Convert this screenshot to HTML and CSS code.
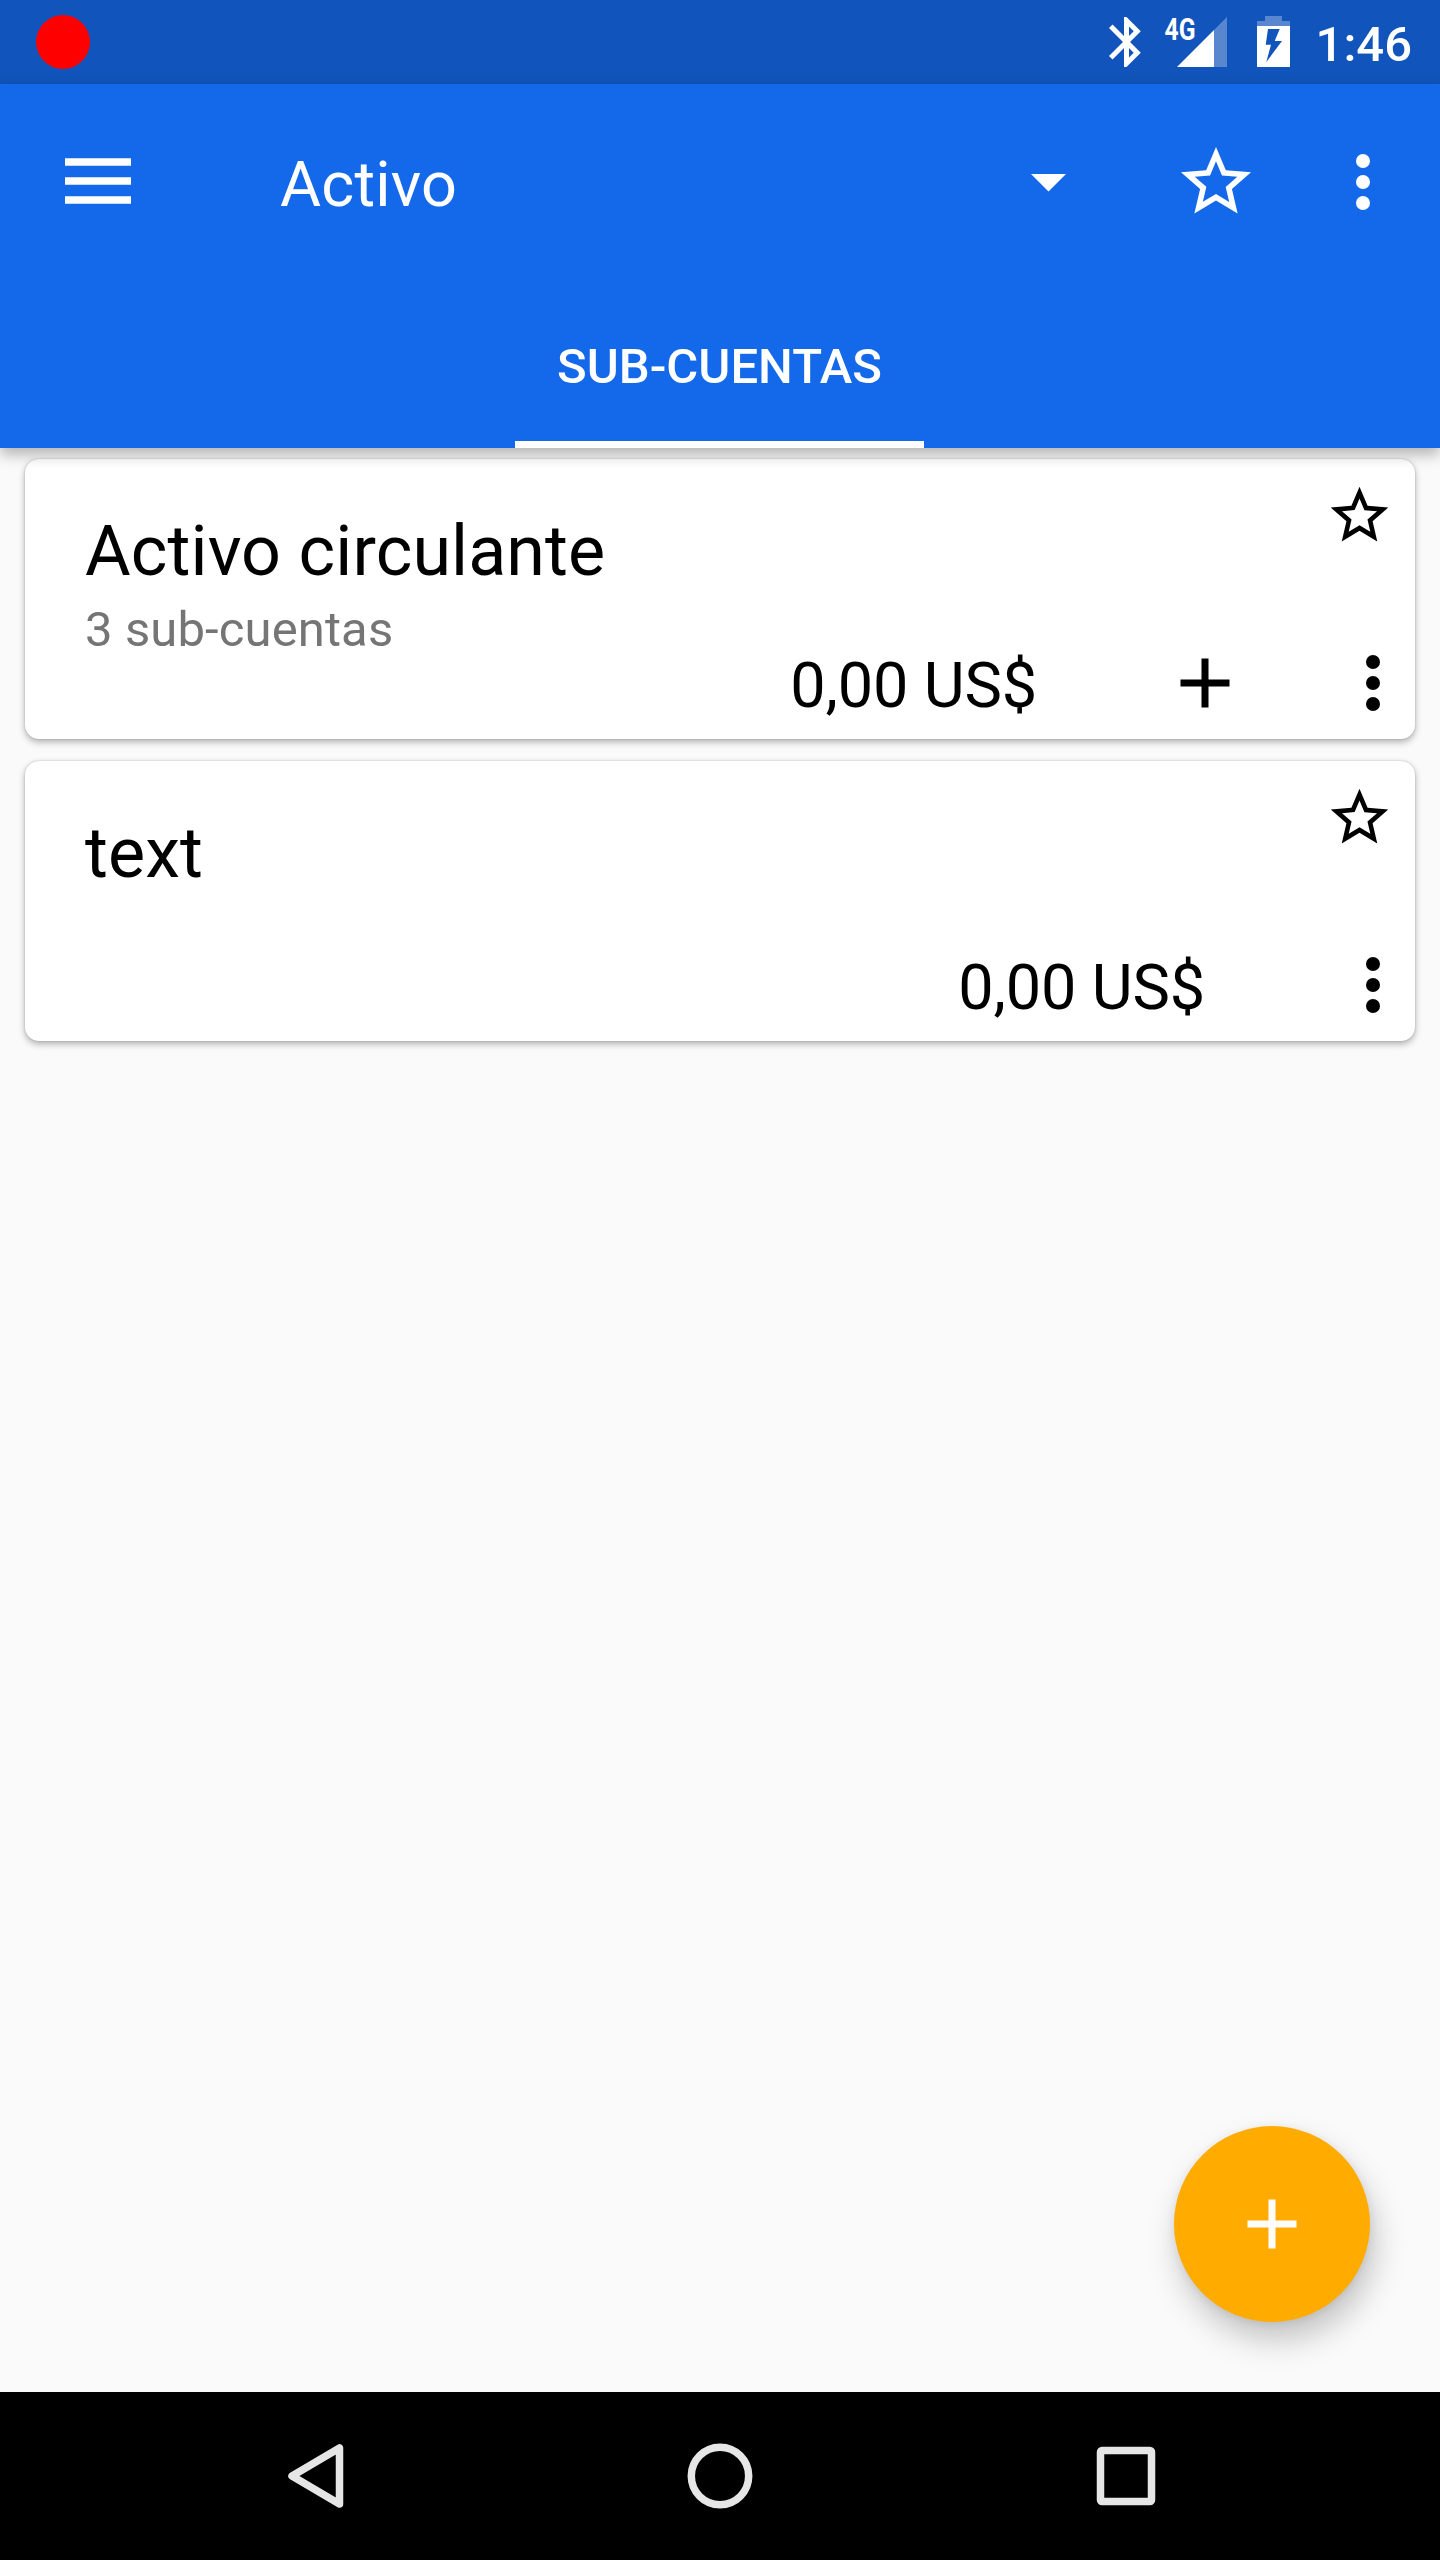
FILE: index.html
```html
<!DOCTYPE html>
<html lang="es">
<head>
<meta charset="utf-8">
<title>Activo</title>
<link rel="stylesheet" href="styles.css">
</head>
<body>
<svg class="defs" aria-hidden="true">
  <symbol id="star" viewBox="0 0 24 24"><path d="M22 9.24l-7.19-.62L12 2 9.19 8.63 2 9.24l5.46 4.73L5.82 21 12 17.27 18.18 21l-1.63-7.03L22 9.24zM12 15.4l-3.76 2.27 1-4.28-3.32-2.88 4.38-.38L12 6.1l1.71 4.04 4.38.38-3.32 2.88 1 4.28L12 15.4z"/></symbol>
  <symbol id="more" viewBox="0 0 24 24"><circle cx="12" cy="6" r="2"/><circle cx="12" cy="12" r="2"/><circle cx="12" cy="18" r="2"/></symbol>
  <symbol id="plus" viewBox="0 0 24 24"><path d="M19 13h-6v6h-2v-6H5v-2h6V5h2v6h6z"/></symbol>
</svg>
<div class="screen">
  <div class="status">
    <span class="record"></span>
    <svg class="status-icons" viewBox="0 0 220 84">
      <path transform="translate(16.5 12) scale(2.5)" d="M17.71 7.71L12 2h-1v7.59L6.41 5 5 6.41 10.59 12 5 17.59 6.41 19 11 14.41V22h1l5.71-5.71-4.3-4.29 4.3-4.29zM13 5.83l1.88 1.88L13 9.59V5.83zm1.88 10.46L13 18.17v-3.76l1.88 1.88z"/>
      <text class="network" x="84.500" y="39.500" textLength="31" lengthAdjust="spacingAndGlyphs">4G</text>
      <path d="M97 67l37-37v37z"/>
      <path class="faint" d="M134 30l13-13v50h-13z"/>
      <path class="faint" d="M185 16h17v5h8v5h-33v-5h8z"/>
      <path fill-rule="evenodd" d="M177 26h33v41h-33zM188 29l-2.300 15.700h5.300L186.300 62 202 41h-7.300L199.700 29z"/>
    </svg>
    <span class="clock">1:46</span>
  </div>
  <header class="appbar">
    <div class="toolbar">
      <svg class="menu" viewBox="0 0 66 46"><path d="M0 .3h66v7.400H0zM0 19.300h66v7.400H0zM0 38.300h66v7.400H0z"/></svg>
      <h1 class="title">Activo</h1>
      <svg class="caret" viewBox="0 0 35 17.500"><path d="M0 0h35L17.500 17.500z"/></svg>
      <svg class="icon fav"><use href="#star"/></svg>
      <svg class="icon"><use href="#more"/></svg>
    </div>
    <nav class="tabs"><span class="tab">SUB-CUENTAS</span></nav>
  </header>
  <main class="list">
    <article class="card">
      <div class="card-top">
        <div class="labels">
          <h2 class="name">Activo circulante</h2>
          <p class="sub">3 sub-cuentas</p>
        </div>
        <svg class="card-star"><use href="#star"/></svg>
      </div>
      <div class="card-actions">
        <span class="amount">0,00 US$</span>
        <svg class="icon add"><use href="#plus"/></svg>
        <svg class="icon"><use href="#more"/></svg>
      </div>
    </article>
    <article class="card">
      <div class="card-top">
        <div class="labels">
          <h2 class="name">text</h2>
        </div>
        <svg class="card-star"><use href="#star"/></svg>
      </div>
      <div class="card-actions">
        <span class="amount">0,00 US$</span>
        <svg class="icon"><use href="#more"/></svg>
      </div>
    </article>
    <button class="fab" aria-label="Agregar"><svg class="icon"><use href="#plus"/></svg></button>
  </main>
  <footer class="navbar">
    <svg class="nav-icon" viewBox="0 0 84 84"><path d="M55.500 14v56L8 42z"/></svg>
    <svg class="nav-icon" viewBox="0 0 84 84"><circle cx="42" cy="42" r="28.700"/></svg>
    <svg class="nav-icon" viewBox="0 0 84 84"><rect x="16.500" y="16.500" width="51" height="51" rx="1.500"/></svg>
  </footer>
</div>
</body>
</html>
```
FILE: styles.css
```css
* { box-sizing: border-box; }

body {
  margin: 0;
  font-family: Roboto, sans-serif;
}

.defs { display: none; }

.screen {
  width: 1440px;
  height: 2560px;
  display: flex;
  flex-direction: column;
  background: #fafafa;
  overflow: hidden;
}

.icon {
  width: 84px;
  height: 84px;
  flex: none;
}

/* Status bar */
.status {
  height: 84px;
  flex: none;
  display: flex;
  align-items: center;
  padding: 0 28px 0 36px;
  background: #1154bb;
  color: #fff;
}

.record {
  width: 54px;
  height: 54px;
  border-radius: 50%;
  background: #f00;
}

.status-icons {
  width: 220px;
  height: 84px;
  margin-left: 990px;
  fill: #fff;
}

.network {
  font-size: 30.5px;
  font-weight: 700;
}

.faint { fill-opacity: .3; }

.clock {
  margin-left: auto;
  padding-top: 6px;
  font-size: 49px;
  font-weight: 500;
  line-height: 58px;
}

/* App bar */
.appbar {
  height: 364px;
  flex: none;
  position: relative;
  z-index: 1;
  display: flex;
  flex-direction: column;
  background: #1469eb;
  color: #fff;
  fill: #fff;
  box-shadow: 0 6px 14px rgba(0, 0, 0, .3);
}

.toolbar {
  height: 196px;
  display: flex;
  align-items: center;
  padding: 0 35px 0 65px;
}

.menu {
  width: 66px;
  height: 46px;
  margin-bottom: 3px;
}

.title {
  width: 750px;
  margin: 0 0 0 149px;
  padding-top: 5px;
  font-size: 63px;
  font-weight: 400;
  letter-spacing: .2px;
  line-height: 84px;
}

.caret {
  width: 35px;
  height: 17.5px;
  margin: 1.5px 0 0 .5px;
}

.fav { margin: 0 63px 0 108px; }

.tabs {
  height: 168px;
  display: flex;
  justify-content: center;
  padding-right: 1px;
}

.tab {
  width: 409px;
  padding-top: 58px;
  border-bottom: 7px solid #fff;
  font-size: 49px;
  font-weight: 500;
  line-height: 58px;
  text-align: center;
}

/* Account list */
.list {
  flex: 1;
  position: relative;
  display: flex;
  flex-direction: column;
  gap: 22px;
  padding: 11px 25px 0;
}

.card {
  height: 280px;
  display: flex;
  flex-direction: column;
  justify-content: space-between;
  padding-bottom: 14px;
  border-radius: 14px;
  background: #fff;
  box-shadow: 0 3px 7px rgba(0, 0, 0, .3), 0 0 2px rgba(0, 0, 0, .2);
}

.card-top {
  height: 182px;
  margin-bottom: -16px;
  display: flex;
  justify-content: space-between;
  padding: 21.5px 21.5px 0 60px;
}

.labels { padding-top: 28.5px; }

.name {
  margin: 0;
  font-size: 70px;
  font-weight: 400;
  letter-spacing: .1px;
  line-height: 84px;
}

.sub {
  margin: 8px 0 0;
  color: #757575;
  font-size: 49px;
  letter-spacing: .12px;
  line-height: 58px;
}

.card-star {
  width: 69px;
  height: 69px;
}

.card-actions {
  display: flex;
  justify-content: flex-end;
}

.amount {
  margin-right: 126px;
  padding-top: 5px;
  font-size: 63px;
  letter-spacing: -.15px;
  line-height: 79px;
}

.add { margin-right: 84px; }

.fab {
  position: absolute;
  right: 70px;
  bottom: 70px;
  width: 196px;
  height: 196px;
  display: flex;
  align-items: center;
  justify-content: center;
  padding: 0;
  border: 0;
  border-radius: 50%;
  background: #ffab00;
  fill: #fff;
  box-shadow: 5px 18px 32px rgba(0, 0, 0, .22), 0 2px 10px rgba(0, 0, 0, .08);
}

/* System navigation */
.navbar {
  height: 168px;
  flex: none;
  display: grid;
  grid-template-columns: 394px 405.5px 84px;
  align-items: center;
  padding-left: 284px;
  background: #000;
}

.nav-icon {
  width: 84px;
  height: 84px;
  fill: none;
  stroke: #e6e6e6;
  stroke-width: 7.5px;
  stroke-linejoin: round;
}
```
